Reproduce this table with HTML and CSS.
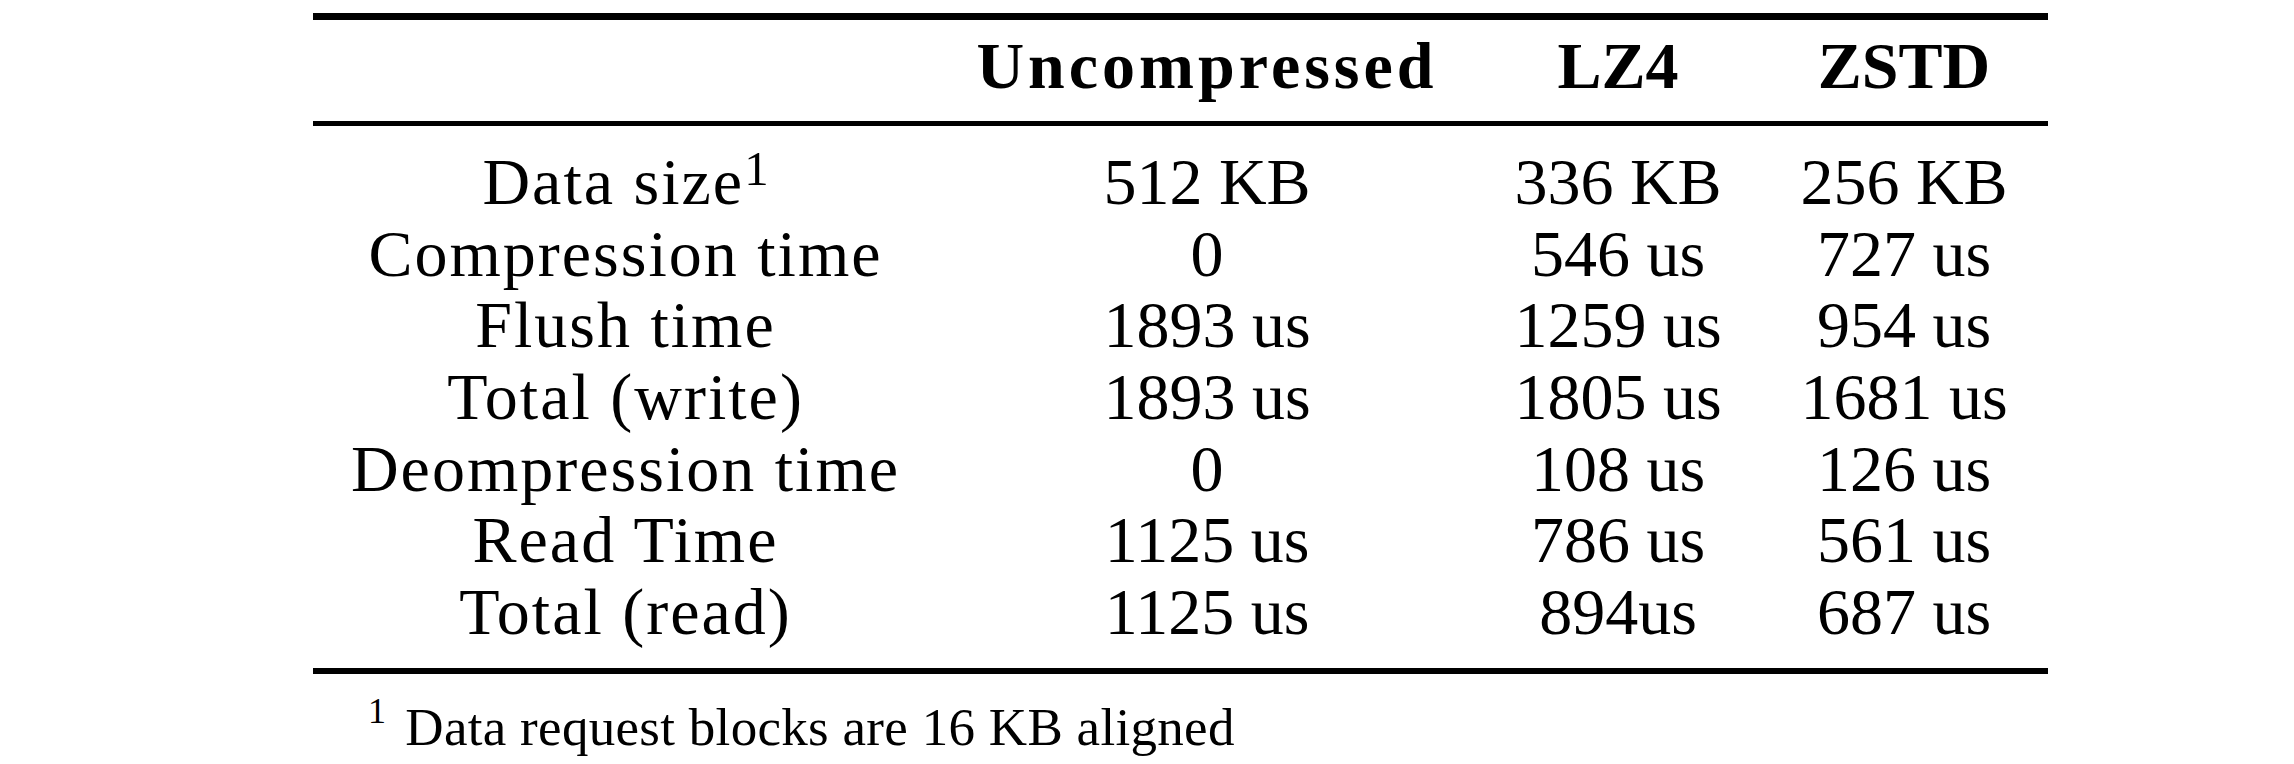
FILE: index.html
```html
<!DOCTYPE html>
<html lang="en">
<head>
    <meta charset="UTF-8">
    <meta name="viewport" content="width=device-width, initial-scale=1.0">
    <title>Compression Results</title>
    <link rel="stylesheet" href="styles.css">
</head>
<body>
    <div class="figure">
        <table class="results">
            <colgroup>
                <col class="col-label">
                <col class="col-raw">
                <col class="col-lz4">
                <col class="col-zstd">
            </colgroup>
            <thead>
                <tr>
                    <th></th>
                    <th class="wide">Uncompressed</th>
                    <th>LZ4</th>
                    <th>ZSTD</th>
                </tr>
            </thead>
            <tbody>
                <tr>
                    <td>Data size<sup class="mark">1</sup></td>
                    <td>512 KB</td>
                    <td>336 KB</td>
                    <td>256 KB</td>
                </tr>
                <tr>
                    <td>Compression time</td>
                    <td>0</td>
                    <td>546 us</td>
                    <td>727 us</td>
                </tr>
                <tr>
                    <td>Flush time</td>
                    <td>1893 us</td>
                    <td>1259 us</td>
                    <td>954 us</td>
                </tr>
                <tr>
                    <td>Total (write)</td>
                    <td>1893 us</td>
                    <td>1805 us</td>
                    <td>1681 us</td>
                </tr>
                <tr>
                    <td>Deompression time</td>
                    <td>0</td>
                    <td>108 us</td>
                    <td>126 us</td>
                </tr>
                <tr>
                    <td>Read Time</td>
                    <td>1125 us</td>
                    <td>786 us</td>
                    <td>561 us</td>
                </tr>
                <tr>
                    <td>Total (read)</td>
                    <td>1125 us</td>
                    <td>894us</td>
                    <td>687 us</td>
                </tr>
            </tbody>
        </table>
        <p class="footnote"><sup class="mark">1</sup>Data request blocks are 16 KB aligned</p>
    </div>
</body>
</html>
```

FILE: styles.css
```css
body {
    margin: 0;
    background-color: white;
    color: #000;
    font-family: "Liberation Serif", "Times New Roman", serif;
}
.figure {
    margin: 13px 0 0 313px;
}
.results {
    table-layout: fixed;
    width: 1735px;
    border-collapse: separate;
    border-spacing: 0;
    font-size: 66px;
}
.col-label {
    width: 625px;
}
.col-raw {
    width: 538px;
}
.col-lz4 {
    width: 284px;
}
.col-zstd {
    width: 288px;
}
.results th,
.results td {
    padding: 0;
    line-height: 71.67px;
    text-align: center;
    white-space: nowrap;
}
.results th {
    font-weight: bold;
    padding: 10px 0 19.33px;
    border-top: 7px solid #000;
    border-bottom: 5px solid #000;
}
.results th.wide {
    letter-spacing: 4px;
}
.results td:first-child {
    letter-spacing: 2px;
}
.results tbody tr:first-child td {
    padding-top: 20px;
}
.results tbody tr:last-child td {
    padding-bottom: 20.33px;
    border-bottom: 6px solid #000;
}
.results .mark {
    font-size: 0.74em;
    line-height: 0;
    vertical-align: 0.38em;
    letter-spacing: 0;
}
.footnote {
    margin: 22px 0 0;
    padding-left: 55px;
    font-size: 53px;
    line-height: 1.2;
    letter-spacing: 0.3px;
}
.footnote .mark {
    font-size: 36px;
    line-height: 0;
    vertical-align: 22px;
    margin-right: 19px;
}
```
